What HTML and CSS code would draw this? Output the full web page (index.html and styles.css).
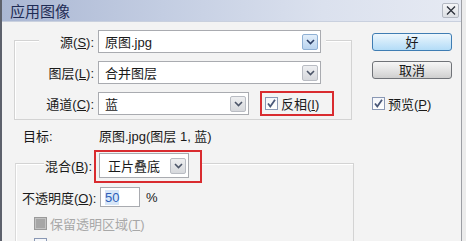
FILE: index.html
```html
<!DOCTYPE html>
<html lang="zh-CN">
<head>
<meta charset="utf-8">
<title>应用图像</title>
<link rel="stylesheet" href="styles.css">
</head>
<body>
<div class="window">
  <div class="titlebar">
    <span class="title">应用图像</span>
    <span class="close"><svg width="10" height="9" viewBox="0 0 10 9"><path d="M1 0.5 L9 8.5 M9 0.5 L1 8.5" stroke="#2a2f3a" stroke-width="1.3" fill="none"/></svg></span>
  </div>
  <div class="content">
    <div class="main">
      <div class="group group1">
        <div class="rows">
          <div class="row row-first">
            <span class="label">源(<u>S</u>):</span>
            <div class="select wide"><span class="val">原图.jpg</span><span class="arrow blue"><svg width="9" height="6" viewBox="0 0 9 6"><path d="M1 1 L4.5 4.5 L8 1" stroke="#2c3f66" stroke-width="1.6" fill="none"/></svg></span></div>
          </div>
          <div class="row">
            <span class="label">图层(<u>L</u>):</span>
            <div class="select wide"><span class="val">合并图层</span><span class="arrow"><svg width="9" height="6" viewBox="0 0 9 6"><path d="M1 1 L4.5 4.5 L8 1" stroke="#4c5568" stroke-width="1.6" fill="none"/></svg></span></div>
          </div>
          <div class="row">
            <span class="label">通道(<u>C</u>):</span>
            <div class="select narrow"><span class="val">蓝</span><span class="arrow"><svg width="9" height="6" viewBox="0 0 9 6"><path d="M1 1 L4.5 4.5 L8 1" stroke="#4c5568" stroke-width="1.6" fill="none"/></svg></span></div>
            <div class="redbox invert">
              <span class="check"><svg width="11" height="11" viewBox="0 0 11 11"><path d="M2 5.5 L4.3 8.5 L9 1.8" stroke="#4a5878" stroke-width="1.8" fill="none"/></svg></span>
              <span class="ctext">反相(<u>I</u>)</span>
            </div>
          </div>
        </div>
      </div>
      <div class="target">
        <span class="tlabel">目标:</span>
        <span class="tval">原图.jpg(图层 1, 蓝)</span>
      </div>
      <div class="group group2">
        <div class="row blend">
          <span class="label blabel">混合(<u>B</u>):</span>
          <div class="redbox blendbox">
            <div class="select blendsel"><span class="val">正片叠底</span><span class="arrow"><svg width="9" height="6" viewBox="0 0 9 6"><path d="M1 1 L4.5 4.5 L8 1" stroke="#4c5568" stroke-width="1.6" fill="none"/></svg></span></div>
          </div>
        </div>
        <div class="row opacity">
          <span class="label olabel">不透明度(<u>O</u>):</span>
          <div class="input"><span class="sel">50</span></div>
          <span class="pct">%</span>
        </div>
        <div class="row cbrow disabled">
          <span class="check filled"></span>
          <span class="ctext">保留透明区域(<u>T</u>)</span>
        </div>
        <div class="row cbrow">
          <span class="check"></span>
        </div>
      </div>
    </div>
    <div class="side">
      <div class="btn default">好</div>
      <div class="btn">取消</div>
      <div class="preview">
        <span class="check"><svg width="11" height="11" viewBox="0 0 11 11"><path d="M2 5.5 L4.3 8.5 L9 1.8" stroke="#4a5878" stroke-width="1.8" fill="none"/></svg></span>
        <span class="ctext">预览(<u>P</u>)</span>
      </div>
    </div>
  </div>
</div>
</body>
</html>
```
FILE: styles.css
```css
html, body {
  margin: 0;
  padding: 0;
  background: #ececec;
  overflow: hidden;
}
body {
  font-family: "Liberation Sans", "Noto Sans CJK SC", sans-serif;
  font-size: 13px;
  color: #1a1a1a;
}
.window {
  width: 459px;
  height: 241px;
  border-left: 2px solid #5d616c;
  border-right: 1px solid #9c9ea4;
  background: #f3f3f3;
  overflow: hidden;
}
.titlebar {
  height: 21px;
  border-bottom: 1px solid #c9d0de;
  background: linear-gradient(to right, #aab7d3 0%, #c3cde2 35%, #dbe1ee 70%, #e6eaf3 100%);
  display: flex;
  align-items: center;
  justify-content: space-between;
  padding: 0 2px 0 8px;
}
.title {
  font-family: "Noto Sans CJK SC", sans-serif;
  font-size: 15px;
  color: #1f2c55;
  line-height: 21px;
}
.close {
  width: 15px;
  height: 13px;
  border: 1px solid #b3b8c2;
  border-radius: 2px;
  background: linear-gradient(#f4f5f7, #dcdfe4);
  display: flex;
  align-items: center;
  justify-content: center;
}
.content {
  display: flex;
}
.main {
  width: 370px;
  flex: none;
}
.group {
  box-sizing: border-box;
  border: 1px solid #d3d3d3;
  box-shadow: inset 1px 1px 0 #ffffff;
}
.group1 {
  margin: 18px 0 0 12px;
  width: 338px;
  height: 80px;
}
.rows {
  margin-top: -11px;
  display: flex;
  flex-direction: column;
  gap: 8px;
}
.row {
  display: flex;
  align-items: center;
}
.rows .row {
  height: 23px;
  margin-left: 24px;
}
.row-first {
  background: #f3f3f3;
  width: 287px;
}
.label {
  box-sizing: border-box;
  width: 59px;
  padding-right: 4px;
  text-align: right;
  white-space: nowrap;
}
.select {
  box-sizing: border-box;
  height: 23px;
  background: #fff;
  border: 1px solid #a9abb0;
  display: flex;
  align-items: center;
  justify-content: space-between;
  padding-left: 6px;
  padding-right: 2px;
}
.select.wide { width: 223px; }
.select.narrow { width: 151px; }
.val { white-space: nowrap; }
.arrow {
  box-sizing: border-box;
  width: 16px;
  height: 16px;
  border: 1px solid #b9bcc3;
  border-radius: 2px;
  background: linear-gradient(#eeeff1, #d6d8dc);
  display: flex;
  align-items: center;
  justify-content: center;
}
.arrow.blue {
  border-color: #8fb0d4;
  background: linear-gradient(#e2eefa, #b9d3ee);
}
.redbox {
  box-sizing: border-box;
  border: 2px solid #d92b2f;
  display: flex;
  align-items: center;
}
.invert {
  margin-left: 11px;
  width: 74px;
  height: 25px;
  padding-left: 3px;
  gap: 3px;
}
.check {
  box-sizing: border-box;
  width: 13px;
  height: 13px;
  border: 1px solid #8a98b4;
  background: linear-gradient(#f4f6fa, #ffffff);
  display: flex;
  align-items: center;
  justify-content: center;
  flex: none;
}
.ctext { white-space: nowrap; }
.target {
  margin: 8px 0 0 21px;
  height: 17px;
  line-height: 17px;
  display: flex;
}
.tlabel { width: 76px; }
.group2 {
  margin: 18px 0 0 13px;
  width: 339px;
  height: 120px;
  border-left-color: #dadada;
}
.blend {
  margin-top: -14px;
  height: 33px;
}
.blabel {
  margin-left: 28px;
  width: 50px;
  padding-right: 2px;
  background: #f3f3f3;
  height: 20px;
  line-height: 20px;
}
.blendbox {
  padding: 1px 11px 3px 3px;
  height: 33px;
  width: 108px;
  background: #f3f3f3;
}
.blendsel {
  width: 90px;
  height: 25px;
  padding-left: 8px;
}
.opacity {
  margin-top: 4px;
  height: 20px;
}
.olabel {
  margin-left: 6px;
  width: 78px;
  padding-right: 5px;
}
.input {
  box-sizing: border-box;
  width: 40px;
  height: 20px;
  background: #fff;
  border: 1px solid #a9abb0;
  padding-left: 4px;
  display: flex;
  align-items: center;
}
.sel {
  background: #d7e6f8;
  color: #2e5fb8;
  line-height: 15px;
}
.pct { margin-left: 6px; }
.cbrow {
  margin-left: 18px;
  margin-top: 10px;
  height: 13px;
  gap: 3px;
}
.cbrow + .cbrow { margin-top: 8px; }
.disabled { color: #a8a8a8; }
.check.filled {
  border-color: #9a9a9a;
  background: #a6a6a6;
  box-shadow: inset 0 0 0 1px #c2c2c2;
}
.side {
  padding-top: 11px;
  display: flex;
  flex-direction: column;
  align-items: flex-start;
}
.btn {
  box-sizing: border-box;
  width: 80px;
  height: 18px;
  border: 1px solid #707378;
  border-radius: 3px;
  background: linear-gradient(#f6f6f6 0%, #e4e4e4 50%, #cfcfcf 100%);
  text-align: center;
  line-height: 16px;
  font-family: "Noto Sans CJK SC", sans-serif;
  font-size: 13px;
  color: #1a1a1a;
}
.btn + .btn { margin-top: 10px; }
.btn.default {
  border-color: #3f7db3;
  background: linear-gradient(#eef7fd 0%, #cfe9fa 50%, #b3dcf7 100%);
}
.preview {
  margin-top: 18px;
  display: flex;
  align-items: center;
  gap: 3px;
  height: 13px;
}
```
